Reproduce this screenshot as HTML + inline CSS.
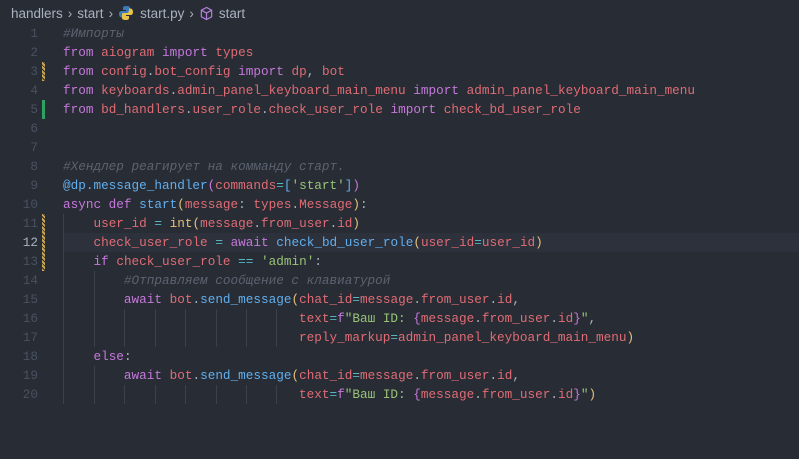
<!DOCTYPE html>
<html><head><meta charset="utf-8"><style>
html,body{margin:0;padding:0;background:#282c34;width:799px;height:459px;overflow:hidden}
.bc{position:absolute;left:11px;top:3px;font:13.5px "Liberation Sans",sans-serif;color:#a9b1bf;white-space:pre;display:flex;align-items:center;height:20px}
.code{position:absolute;top:24px;left:0;width:799px;font:12.7px/19px "Liberation Mono","DejaVu Sans Mono",monospace}
.ln{position:relative;height:19px}
.n{position:absolute;left:0;width:38px;text-align:right;color:#495162}
.t{position:absolute;left:63px;color:#abb2bf;white-space:pre}
.k{color:#c678dd}.r{color:#e06c75}.f{color:#61afef}.s{color:#98c379}.c{color:#5c6370;font-style:italic}.y{color:#e5c07b}.o{color:#56b6c2}.p{color:#abb2bf}.b{color:#c678dd}
.mod{position:absolute;left:42px;width:3px;background:repeating-linear-gradient(45deg,#c9a650 0 2px,#282c34 2px 3px)}
.add{position:absolute;left:42px;width:3px;background:#2ea262}
.g{position:absolute;width:1px;background:#3b404a}
.cur{position:absolute;left:63px;right:0;height:19px;background:#2c313c}
</style></head><body>
<div class="bc">handlers<span style="margin:0 5px">›</span>start<span style="margin:0 5px">›</span><svg width="16" height="16" viewBox="0 0 16 16" style="margin-right:6px"><path d="M8 1C5 1 5 2.5 5 3v2h3v1H3.5C2 6 1 7 1 9s1 3.5 2.5 3.5H5V10.5C5 9 6 8 7.5 8h3C12 8 12 7 12 6V3c0-1.5-1.5-2-4-2z" fill="#3d7ab8"/><path d="M8 15c3 0 3-1.5 3-2v-2H8v-1h4.5C14 10 15 9 15 7s-1-3.5-2.5-3.5H11v2c0 1.5-1 2.5-2.5 2.5h-3C4 8 4 9 4 10v3c0 1.5 1.5 2 4 2z" fill="#e8c34a"/></svg>start.py<span style="margin:0 5px">›</span><svg width="15" height="15" viewBox="0 0 16 16" style="margin-right:5px"><path d="M8 1.5l5.5 3v7L8 14.5l-5.5-3v-7z M2.5 4.5L8 7.5l5.5-3 M8 7.5v7" fill="none" stroke="#b180d7" stroke-width="1.3"/></svg>start</div>
<div class="code">
<div class="cur" style="top:209px"></div>
<div class="mod" style="top:38px;height:19px"></div>
<div class="add" style="top:76px;height:19px"></div>
<div class="mod" style="top:190px;height:57px"></div>
<div class="g" style="left:63px;top:190px;height:190px"></div>
<div class="g" style="left:94px;top:247px;height:76px"></div>
<div class="g" style="left:94px;top:342px;height:38px"></div>
<div class="g" style="left:124px;top:285px;height:38px"></div>
<div class="g" style="left:124px;top:361px;height:19px"></div>
<div class="g" style="left:155px;top:285px;height:38px"></div><div class="g" style="left:155px;top:361px;height:19px"></div>
<div class="g" style="left:185px;top:285px;height:38px"></div><div class="g" style="left:185px;top:361px;height:19px"></div>
<div class="g" style="left:216px;top:285px;height:38px"></div><div class="g" style="left:216px;top:361px;height:19px"></div>
<div class="g" style="left:246px;top:285px;height:38px"></div><div class="g" style="left:246px;top:361px;height:19px"></div>
<div class="g" style="left:276px;top:285px;height:38px"></div><div class="g" style="left:276px;top:361px;height:19px"></div>
<div class="ln"><span class="n">1</span><span class="t"><span class="c">#Импорты</span></span></div>
<div class="ln"><span class="n">2</span><span class="t"><span class="k">from</span> <span class="r">aiogram</span> <span class="k">import</span> <span class="r">types</span></span></div>
<div class="ln"><span class="n">3</span><span class="t"><span class="k">from</span> <span class="r">config</span><span class="p">.</span><span class="r">bot_config</span> <span class="k">import</span> <span class="r">dp</span><span class="p">,</span> <span class="r">bot</span></span></div>
<div class="ln"><span class="n">4</span><span class="t"><span class="k">from</span> <span class="r">keyboards</span><span class="p">.</span><span class="r">admin_panel_keyboard_main_menu</span> <span class="k">import</span> <span class="r">admin_panel_keyboard_main_menu</span></span></div>
<div class="ln"><span class="n">5</span><span class="t"><span class="k">from</span> <span class="r">bd_handlers</span><span class="p">.</span><span class="r">user_role</span><span class="p">.</span><span class="r">check_user_role</span> <span class="k">import</span> <span class="r">check_bd_user_role</span></span></div>
<div class="ln"><span class="n">6</span></div>
<div class="ln"><span class="n">7</span></div>
<div class="ln"><span class="n">8</span><span class="t"><span class="c">#Хендлер реагирует на комманду старт.</span></span></div>
<div class="ln"><span class="n">9</span><span class="t"><span class="f">@dp.message_handler</span><span class="b">(</span><span class="r">commands</span><span class="o">=</span><span class="f">[</span><span class="s">'start'</span><span class="f">]</span><span class="b">)</span></span></div>
<div class="ln"><span class="n">10</span><span class="t"><span class="k">async def</span> <span class="f">start</span><span class="y">(</span><span class="r">message</span><span class="p">:</span> <span class="r">types</span><span class="p">.</span><span class="r">Message</span><span class="y">)</span><span class="p">:</span></span></div>
<div class="ln"><span class="n">11</span><span class="t">    <span class="r">user_id</span> <span class="o">=</span> <span class="y">int</span><span class="y">(</span><span class="r">message</span><span class="p">.</span><span class="r">from_user</span><span class="p">.</span><span class="r">id</span><span class="y">)</span></span></div>
<div class="ln"><span class="n" style="color:#abb2bf">12</span><span class="t">    <span class="r">check_user_role</span> <span class="o">=</span> <span class="k">await</span> <span class="f">check_bd_user_role</span><span class="y">(</span><span class="r">user_id</span><span class="o">=</span><span class="r">user_id</span><span class="y">)</span></span></div>
<div class="ln"><span class="n">13</span><span class="t">    <span class="k">if</span> <span class="r">check_user_role</span> <span class="o">==</span> <span class="s">'admin'</span><span class="p">:</span></span></div>
<div class="ln"><span class="n">14</span><span class="t">        <span class="c">#Отправляем сообщение с клавиатурой</span></span></div>
<div class="ln"><span class="n">15</span><span class="t">        <span class="k">await</span> <span class="r">bot</span><span class="p">.</span><span class="f">send_message</span><span class="y">(</span><span class="r">chat_id</span><span class="o">=</span><span class="r">message</span><span class="p">.</span><span class="r">from_user</span><span class="p">.</span><span class="r">id</span><span class="p">,</span></span></div>
<div class="ln"><span class="n">16</span><span class="t">                               <span class="r">text</span><span class="o">=</span><span class="k">f</span><span class="s">"Ваш ID: </span><span class="k">{</span><span class="r">message</span><span class="p">.</span><span class="r">from_user</span><span class="p">.</span><span class="r">id</span><span class="k">}</span><span class="s">"</span><span class="p">,</span></span></div>
<div class="ln"><span class="n">17</span><span class="t">                               <span class="r">reply_markup</span><span class="o">=</span><span class="r">admin_panel_keyboard_main_menu</span><span class="y">)</span></span></div>
<div class="ln"><span class="n">18</span><span class="t">    <span class="k">else</span><span class="p">:</span></span></div>
<div class="ln"><span class="n">19</span><span class="t">        <span class="k">await</span> <span class="r">bot</span><span class="p">.</span><span class="f">send_message</span><span class="y">(</span><span class="r">chat_id</span><span class="o">=</span><span class="r">message</span><span class="p">.</span><span class="r">from_user</span><span class="p">.</span><span class="r">id</span><span class="p">,</span></span></div>
<div class="ln"><span class="n">20</span><span class="t">                               <span class="r">text</span><span class="o">=</span><span class="k">f</span><span class="s">"Ваш ID: </span><span class="k">{</span><span class="r">message</span><span class="p">.</span><span class="r">from_user</span><span class="p">.</span><span class="r">id</span><span class="k">}</span><span class="s">"</span><span class="y">)</span></span></div>
</div>
</body></html>
